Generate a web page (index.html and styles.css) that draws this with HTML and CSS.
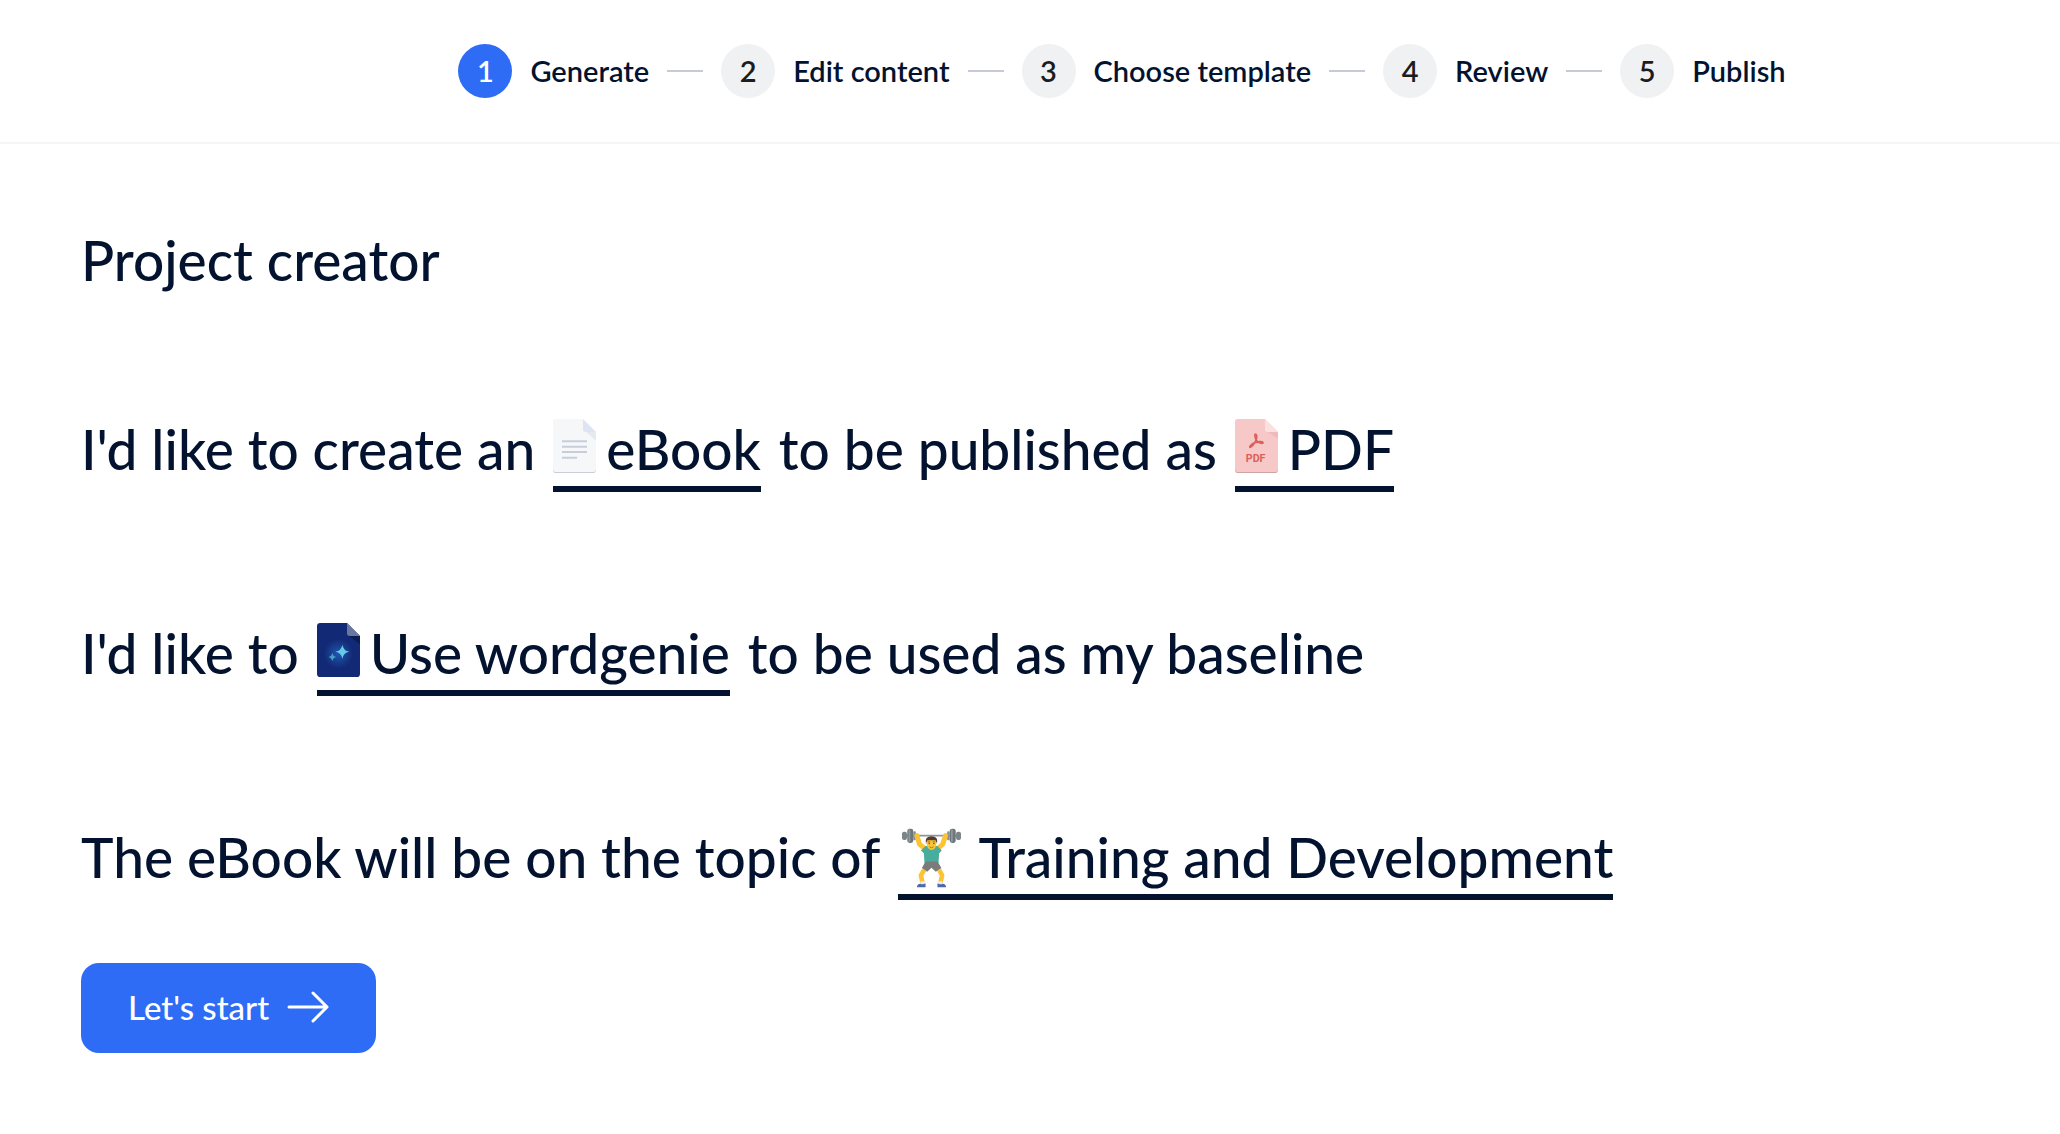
FILE: index.html
```html
<!DOCTYPE html>
<html lang="en">

<head>
    <meta charset="UTF-8">
    <meta name="viewport" content="width=device-width, initial-scale=1.0">
    <title>Project creator</title>
    <link rel="stylesheet" href="styles.css">
</head>

<body>

    <header class="header">
        <ol class="steps">
            <li class="step active"><span class="step-number">1</span><span class="step-label">Generate</span></li>
            <li class="step"><span class="step-number">2</span><span class="step-label">Edit content</span></li>
            <li class="step"><span class="step-number">3</span><span class="step-label">Choose template</span></li>
            <li class="step"><span class="step-number">4</span><span class="step-label">Review</span></li>
            <li class="step"><span class="step-number">5</span><span class="step-label">Publish</span></li>
        </ol>
    </header>

    <main class="creator">
        <h1>Project creator</h1>

        <div class="sentences">
            <div class="sentence">
                <span>I'd like to create an</span>
                <button type="button" class="choice">
                    <svg class="file-icon" viewBox="0 0 129 162" aria-hidden="true">
                        <path d="M10 2H90L129 41V152Q129 162 119 162H10Q0 162 0 152V12Q0 2 10 2Z" fill="#c9ced4" />
                        <path d="M10 0H90L129 39V149Q129 159 119 159H10Q0 159 0 149V10Q0 0 10 0Z" fill="#f5f7f9" />
                        <path d="M96 36L129 66V39Z" fill="#e6e9ee" />
                        <path d="M90 0L129 39H98Q90 39 90 31Z" fill="#dfe4f3" />
                        <path d="M27 67H102M27 83H102M27 99H102M27 116H72" stroke="#c7cedb" stroke-width="6" />
                    </svg>
                    <span>eBook</span>
                </button>
                <span>to be published as</span>
                <button type="button" class="choice">
                    <svg class="file-icon" viewBox="0 0 129 162" aria-hidden="true">
                        <path d="M10 2H90L129 41V152Q129 162 119 162H10Q0 162 0 152V12Q0 2 10 2Z" fill="#cfa3a3" />
                        <path d="M10 0H90L129 39V149Q129 159 119 159H10Q0 159 0 149V10Q0 0 10 0Z" fill="#f6c9c8" />
                        <path d="M96 39L129 59V39Z" fill="#eebbba" />
                        <path d="M90 0L129 39H98Q90 39 90 31Z" fill="#fae1e0" />
                        <path d="M62 46C58 43 59 60 67 67C73 73 84 75 84 71C84 66 67 67 57 72C47 77 42 84 45 85C49 87 61 71 64 61C66 54 66 48 62 46Z" fill="none" stroke="#dc5f5b" stroke-width="5" stroke-linejoin="round" />
                        <text x="62" y="129" text-anchor="middle" class="file-type">PDF</text>
                    </svg>
                    <span>PDF</span>
                </button>
            </div>

            <div class="sentence">
                <span>I'd like to</span>
                <button type="button" class="choice">
                    <svg class="file-icon" viewBox="0 0 129 162" aria-hidden="true">
                        <defs>
                            <radialGradient id="glow">
                                <stop offset="0" stop-color="#2056b0" />
                                <stop offset="1" stop-color="#122a75" />
                            </radialGradient>
                        </defs>
                        <path d="M10 0H90L129 39V152Q129 162 119 162H10Q0 162 0 152V10Q0 0 10 0Z" fill="#122a75" />
                        <circle cx="64" cy="92" r="44" fill="url(#glow)" />
                        <path d="M96 39L129 64V39Z" fill="#0b1c55" />
                        <path d="M90 0L129 39H98Q90 39 90 31Z" fill="#68779f" />
                        <path d="M76 65Q79 83 97 86Q79 89 76 107Q73 89 55 86Q73 83 76 65Z" fill="#62cbe6" />
                        <path d="M46 89Q48 100 58 102Q48 104 46 115Q44 104 34 102Q44 100 46 89Z" fill="#459fc6" />
                    </svg>
                    <span>Use wordgenie</span>
                </button>
                <span>to be used as my baseline</span>
            </div>

            <div class="sentence">
                <span>The eBook will be on the topic of</span>
                <button type="button" class="choice topic">
                    <svg class="topic-icon" viewBox="24 34 184 184" aria-hidden="true">
                        <path d="M36 60H196" stroke="#8f969a" stroke-width="6" />
                        <rect x="27" y="48" width="15" height="25" rx="6" fill="#7b8589" />
                        <rect x="43" y="39" width="18" height="43" rx="7" fill="#6c777c" />
                        <rect x="47" y="41" width="5" height="38" rx="2" fill="#929da1" />
                        <rect x="61" y="47" width="8" height="27" rx="3" fill="#899397" />
                        <rect x="190" y="48" width="15" height="25" rx="6" fill="#7b8589" />
                        <rect x="171" y="39" width="18" height="43" rx="7" fill="#6c777c" />
                        <rect x="175" y="41" width="5" height="38" rx="2" fill="#929da1" />
                        <rect x="163" y="47" width="8" height="27" rx="3" fill="#899397" />
                        <path d="M72 60L80 86L98 101M158 60L150 86L133 101" fill="none" stroke="#fcc432" stroke-width="15" stroke-linecap="round" stroke-linejoin="round" />
                        <path d="M84 105L98 91H134L147 105L139 113L137 144H95L93 113Z" fill="#49ad9e" />
                        <path d="M107 89Q115 106 124 89Z" fill="#f2b32e" />
                        <path d="M94 163L84 180L89 202M139 163L148 180L143 202" fill="none" stroke="#fcc432" stroke-width="14" stroke-linejoin="round" />
                        <path d="M98 138H134L146 158L129 169L116 157L103 169L87 158Z" fill="#7c7b7c" />
                        <path d="M83 198H96V206H83ZM136 198H149V206H136Z" fill="#e4edf3" />
                        <path d="M72 216Q72 206 83 205Q90 209 98 204V216ZM160 216Q160 206 149 205Q142 209 134 204V216Z" fill="#4d68b1" />
                        <ellipse cx="116" cy="83" rx="15" ry="20" fill="#fcc432" />
                        <path d="M99 84Q95 62 116 62Q137 62 133 84L128 74H104Z" fill="#543b34" />
                        <path d="M105 79H112M120 79H127" stroke="#543b34" stroke-width="2" />
                        <circle cx="109" cy="84" r="2" fill="#403a38" />
                        <circle cx="123" cy="84" r="2" fill="#403a38" />
                        <path d="M110 94Q116 99 122 94" fill="none" stroke="#7c502b" stroke-width="2" />
                    </svg>
                    <span>Training and Development</span>
                </button>
            </div>
        </div>

        <button type="button" class="start">
            Let's start
            <svg class="arrow" viewBox="0 0 42 32" aria-hidden="true">
                <path d="M2 16H40M26 2L40 16L26 30" />
            </svg>
        </button>
    </main>

</body>

</html>
```
FILE: styles.css
```css
* {
    box-sizing: border-box;
}

body {
    margin: 0;
    font-family: Lato, sans-serif;
    font-weight: 500;
    color: #03132f;
    background-color: #fff;
}

button {
    border: none;
    font: inherit;
    cursor: pointer;
}

.header {
    /* Left side is kept free, so the steps sit right of the middle */
    padding: 44px 0 44px 184px;
    border-bottom: 2px solid #f5f5f6;
}

.steps {
    display: flex;
    justify-content: center;
    gap: 18px;
    margin: 0;
    padding: 0;
    list-style: none;
    font-size: 29px;
    font-weight: 600;
}

.step {
    display: flex;
    align-items: center;
    gap: 18px;
}

/* Dash between two steps */
.step:not(:last-child)::after {
    content: "";
    width: 36px;
    height: 2px;
    background-color: #c6cad8;
}

.step-number,
.step-label {
    padding-bottom: 2px;
}

.step-number {
    display: flex;
    justify-content: center;
    align-items: center;
    width: 54px;
    height: 54px;
    border-radius: 50%;
    background-color: #f0f1f3;
    color: #1c1c1e;
}

.active .step-number {
    background-color: #2e6cf6;
    color: #fff;
}

.creator {
    padding: 80px 81px;
}

h1 {
    margin: 0;
    font-size: 55px;
    font-weight: 500;
    line-height: 72px;
}

.sentences {
    display: flex;
    flex-direction: column;
    gap: 126px;
    margin-top: 118px;
    font-size: 55px;
    line-height: 70px;
}

.sentence {
    display: flex;
    flex-wrap: wrap;
    align-items: flex-start;
    gap: 18px;
}

.choice {
    display: flex;
    align-items: center;
    gap: 10px;
    padding: 0 0 2px;
    border-bottom: 6px solid #03132f;
    background: none;
    color: inherit;
}

.topic {
    gap: 16px;
    padding-left: 3px;
}

.file-icon {
    width: 43px;
    height: 54px;
    margin-bottom: 6px;
}

.file-type {
    font-family: Roboto, sans-serif;
    font-size: 32px;
    font-weight: 700;
    fill: #dc5f5b;
}

.topic-icon {
    width: 61px;
    height: 61px;
}

.start {
    display: flex;
    align-items: center;
    gap: 18px;
    margin-top: 63px;
    padding: 23px 47px 25px;
    border-radius: 18px;
    background-color: #2e6cf6;
    color: #fff;
    font-size: 33px;
    line-height: 42px;
}

.arrow {
    width: 42px;
    height: 32px;
    fill: none;
    stroke: #fff;
    stroke-width: 3;
    stroke-linecap: round;
    stroke-linejoin: round;
}
```
